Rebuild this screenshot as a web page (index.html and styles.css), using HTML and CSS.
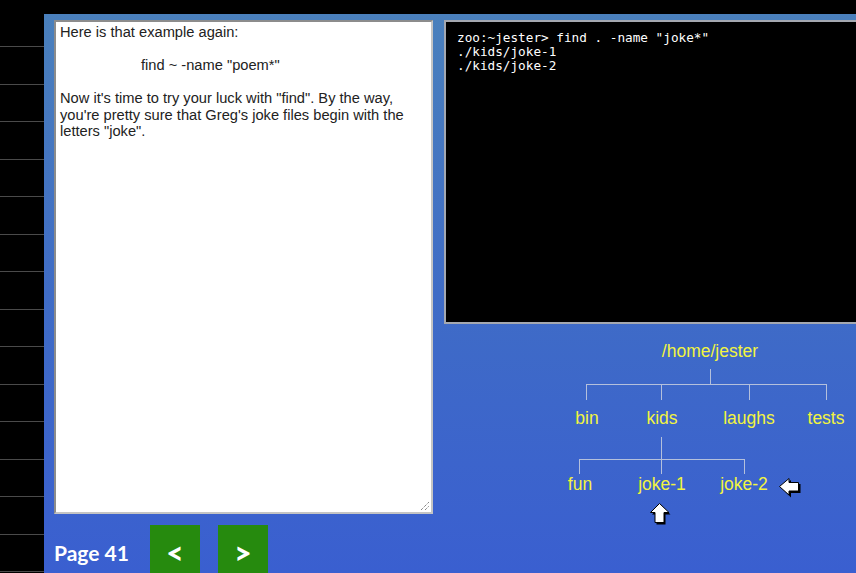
FILE: index.html
```html
<!DOCTYPE html>
<html>
<head>
<meta charset="utf-8">
<link rel="stylesheet" href="styles.css">
</head>
<body>
<div class="screen">
  <div class="rail"></div>
  <div class="main">
    <div class="left">
      <div class="note">
        <p>Here is that example again:</p>
        <p class="example">find ~ -name "poem*"</p>
        <p>Now it's time to try your luck with "find". By the way, you're pretty sure that Greg's joke files begin with the letters "joke".</p>
        <svg class="grip" width="10" height="10" viewBox="0 0 10 10">
          <line x1="1" y1="9" x2="9" y2="1" stroke="#555" stroke-width="1" stroke-dasharray="1 1"/>
          <line x1="5" y1="9" x2="9" y2="5" stroke="#555" stroke-width="1" stroke-dasharray="1 1"/>
        </svg>
      </div>
      <div class="footer">
        <span class="page">Page 41</span>
        <button class="nav">&lt;</button>
        <button class="nav">&gt;</button>
      </div>
    </div>
    <div class="right">
      <div class="term">zoo:~jester&gt; find . -name "joke*"
./kids/joke-1
./kids/joke-2</div>
      <svg class="tree" width="412" height="243" viewBox="0 0 412 243">
        <g transform="translate(-444 -330)">
          <g class="links" stroke="#b4c0dc" stroke-width="1" fill="none" shape-rendering="crispEdges">
            <line x1="710.5" y1="369" x2="710.5" y2="384"/>
            <line x1="586" y1="384.5" x2="827" y2="384.5"/>
            <line x1="586.5" y1="384" x2="586.5" y2="400"/>
            <line x1="661.5" y1="384" x2="661.5" y2="400"/>
            <line x1="749.5" y1="384" x2="749.5" y2="400"/>
            <line x1="826.5" y1="384" x2="826.5" y2="400"/>
            <line x1="661.5" y1="437" x2="661.5" y2="459"/>
            <line x1="579" y1="459.5" x2="745" y2="459.5"/>
            <line x1="579.5" y1="459" x2="579.5" y2="474"/>
            <line x1="661.5" y1="459" x2="661.5" y2="474"/>
            <line x1="744.5" y1="459" x2="744.5" y2="474"/>
          </g>
          <g class="labels">
            <text x="710" y="357">/home/jester</text>
            <text x="587" y="424">bin</text>
            <text x="662" y="424">kids</text>
            <text x="749" y="424">laughs</text>
            <text x="826" y="424">tests</text>
            <text x="580" y="490">fun</text>
            <text x="662" y="490">joke-1</text>
            <text x="744" y="490">joke-2</text>
          </g>
          <g transform="translate(779 478)">
            <path d="M2.5 10 L12 2 L12 6 L21.5 6 L21.5 15 L12 15 L12 19.5 Z" fill="#000"/>
            <path d="M0.5 8.5 L10 0.5 L10 4.5 L19.5 4.5 L19.5 13 L10 13 L10 17 Z" fill="#fff" stroke="#000" stroke-width="1"/>
          </g>
          <g transform="translate(650 503)">
            <path d="M11 2 L20.5 11.5 L15.5 11.5 L15.5 21.5 L6.5 21.5 L6.5 11.5 L2 11.5 Z" fill="#000"/>
            <path d="M9.5 0.5 L19 9.5 L14 9.5 L14 19.5 L5 19.5 L5 9.5 L0.5 9.5 Z" fill="#fff" stroke="#000" stroke-width="1"/>
          </g>
        </g>
      </svg>
    </div>
  </div>
</div>
</body>
</html>
```
FILE: styles.css
```css
html, body {
  margin: 0;
  padding: 0;
  background: #000;
}

.screen {
  display: flex;
  width: 856px;
  height: 573px;
  overflow: hidden;
}

.rail {
  width: 44px;
  flex: none;
  background-color: #000;
  background-image: repeating-linear-gradient(to bottom, #000 0 36.5px, #4a4a4a 36.5px 37.5px);
  background-position: 0 10px;
}

.main {
  flex: none;
  width: 812px;
  height: 559px;
  margin-top: 14px;
  box-sizing: border-box;
  padding: 6px 0 0 10px;
  display: flex;
  gap: 11px;
  overflow: hidden;
  background: linear-gradient(to bottom, #4a80bc 0%, #3f6cc6 50%, #3a5fd0 100%);
}

.left {
  width: 379px;
  flex: none;
  display: flex;
  flex-direction: column;
}

.note {
  position: relative;
  flex: none;
  height: 494px;
  box-sizing: border-box;
  background: #fff;
  border: 2px solid;
  border-color: #8c8c8c #c4c4c4 #c4c4c4 #8c8c8c;
  padding: 2px 4px;
  font-family: "Liberation Sans", Arial, sans-serif;
  font-size: 14.67px;
  line-height: 16.5px;
  color: #222;
}

.note p {
  margin: 0 0 16.5px 0;
}

.note .example {
  margin-left: 81px;
}

.grip {
  position: absolute;
  right: 1px;
  bottom: 1px;
}

.footer {
  flex: none;
  display: flex;
  align-items: center;
  margin-top: 11px;
}

.page {
  font-family: Lato, "Liberation Sans", sans-serif;
  font-weight: 700;
  font-size: 21px;
  color: #fff;
  margin-right: 21px;
}

.nav {
  width: 50px;
  height: 54px;
  border: none;
  padding: 0;
  margin: 0 18px 0 0;
  background: #268a0e;
  color: #fff;
  font-family: Lato, "Liberation Sans", sans-serif;
  font-weight: 900;
  font-size: 30px;
  line-height: 54px;
}

.right {
  width: 420px;
  flex: none;
}

.term {
  height: 304px;
  box-sizing: border-box;
  background: #000;
  border: 2px solid #a4a8b0;
  padding: 9px 11px;
  color: #fff;
  font-family: "DejaVu Sans Mono", "Liberation Mono", monospace;
  font-size: 12.7px;
  line-height: 14px;
  white-space: pre;
}

.tree {
  display: block;
  margin-top: 6px;
}

.labels text {
  font-family: "Liberation Sans", Arial, sans-serif;
  font-size: 17.5px;
  fill: #f2f440;
  text-anchor: middle;
}
```
